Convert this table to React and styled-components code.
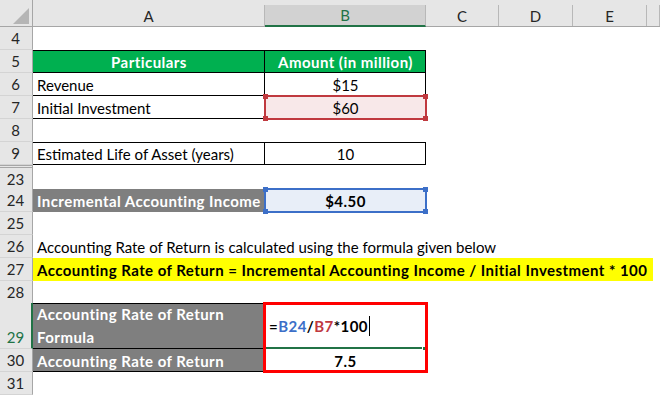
import React from "react";
import styled, { createGlobalStyle, css } from "styled-components";

const Global = createGlobalStyle`
  html, body { margin: 0; padding: 0; background: #fff; }
  body { font-family: "Lato", "Liberation Sans", sans-serif; }
`;

const COLS = "33px 232px 161px 73px 74px 74px 13px";

const Sheet = styled.div`
  width: 660px;
  height: 395px;
  overflow: hidden;
  display: flex;
  flex-direction: column;
  background: #fff;
  font-family: "Lato", "Liberation Sans", sans-serif;
  font-size: 15px;
  color: #000;
`;

const HeaderRow = styled.div`
  display: grid;
  grid-template-columns: ${COLS};
  height: 27px;
  flex: none;
  background: #e6e6e6;
  border-bottom: 1px solid #a6a6a6;
  box-sizing: border-box;
`;

const Corner = styled.div`
  position: relative;
  border-right: 1px solid #a6a6a6;
  display: flex;
  align-items: flex-end;
  justify-content: flex-end;
  padding: 0 3px 2px 0;
`;

const ColHead = styled.div`
  display: flex;
  align-items: center;
  justify-content: center;
  margin-top: 5px;
  border-right: 1px solid #b8b8b8;
  color: #262626;
  font-size: 15px;
  box-sizing: border-box;
  ${(p) =>
    p.$active &&
    css`
      background: #d2d2d2;
      color: #217346;
      border-bottom: 2px solid #217346;
      margin-bottom: -1px;
    `}
`;

const Row = styled.div`
  display: grid;
  grid-template-columns: ${COLS};
  height: ${(p) => p.$h || 23}px;
  flex: none;
`;

const RowHead = styled.div`
  background: #e6e6e6;
  border-right: ${(p) => (p.$active ? "2px solid #217346" : "1px solid #a6a6a6")};
  border-bottom: 1px solid #d4d4d4;
  ${(p) => p.$hidden && css`border-top: 3px double #a6a6a6;`}
  box-sizing: border-box;
  display: flex;
  align-items: ${(p) => (p.$bottom ? "flex-end" : "center")};
  justify-content: center;
  color: ${(p) => (p.$active ? "#217346" : "#262626")};
  font-size: 15px;
  padding-right: ${(p) => (p.$active ? "0" : "1px")};
  line-height: 22px;
`;

const line = "#000";

const Cell = styled.div`
  position: relative;
  display: flex;
  align-items: center;
  justify-content: ${(p) =>
    p.$align === "center" ? "center" : p.$align === "right" ? "flex-end" : "flex-start"};
  padding: 0 4px;
  box-sizing: border-box;
  white-space: nowrap;
  background: ${(p) => p.$bg || "transparent"};
  color: ${(p) => p.$color || "#000"};
  font-weight: ${(p) => (p.$bold ? 700 : 400)};
  letter-spacing: ${(p) => (p.$bold ? "0.45px" : "0")};
  ${(p) => p.$span && css`grid-column: ${p.$span};`}
  box-shadow: ${(p) =>
    [
      p.$top && `inset 0 1px 0 ${line}`,
      p.$right && `inset -1px 0 0 ${line}`,
      p.$bottom && `inset 0 -1px 0 ${line}`,
    ]
      .filter(Boolean)
      .join(", ") || "none"};
`;

const WrapText = styled.div`
  white-space: normal;
  line-height: 23px;
  align-self: stretch;
  display: flex;
  flex-direction: column;
  justify-content: center;
`;

const Highlight = styled(Cell)`
  background: #ffff00;
  margin-right: 7px;
  padding-left: 4px;
`;

const Selection = styled.div`
  position: absolute;
  left: -1px;
  top: -1px;
  right: -1px;
  bottom: -1px;
  border: 2px solid ${(p) => p.$color};
  pointer-events: none;
`;

const Handle = styled.span`
  position: absolute;
  width: 5px;
  height: 5px;
  background: ${(p) => p.$color};
  ${(p) => (p.$v === "top" ? "top: -3px;" : "bottom: -3px;")}
  ${(p) => (p.$h === "left" ? "left: -3px;" : "right: -3px;")}
`;

const RedBox = styled.div`
  position: absolute;
  left: -2px;
  top: -1px;
  width: 165px;
  height: 71px;
  border: 3px solid #ff0000;
  box-sizing: border-box;
  pointer-events: none;
  z-index: 2;
`;

const ActiveLine = styled.div`
  position: absolute;
  left: 1px;
  right: 4px;
  bottom: 0;
  height: 2px;
  background: #217346;
`;

const FillHandle = styled.span`
  position: absolute;
  right: 0px;
  bottom: -1px;
  width: 3px;
  height: 3px;
  background: #217346;
`;

const Formula = styled.span`
  font-weight: 700;
  letter-spacing: 0.45px;
  display: inline-flex;
  align-items: center;
`;

const Ref = styled.span`
  color: ${(p) => p.$color};
`;

const Caret = styled.span`
  display: inline-block;
  width: 1px;
  height: 20px;
  background: #000;
  margin-left: 1px;
`;

function SelectionFrame({ color }) {
  return (
    <Selection $color={color}>
      <Handle $color={color} $v="top" $h="left" />
      <Handle $color={color} $v="bottom" $h="left" />
      <Handle $color={color} $v="top" $h="right" />
      <Handle $color={color} $v="bottom" $h="right" />
    </Selection>
  );
}

function Empty({ n, h, hidden }) {
  return (
    <Row $h={h}>
      <RowHead $hidden={hidden}>{n}</RowHead>
    </Row>
  );
}

export default function App() {
  const gray = "#7f7f7f";
  return (
    <>
      <Global />
      <Sheet>
        <HeaderRow>
          <Corner>
            <svg width="16" height="16" viewBox="0 0 16 16">
              <polygon points="16,0 16,16 0,16" fill="#b5b5b5" />
            </svg>
          </Corner>
          <ColHead>A</ColHead>
          <ColHead $active>B</ColHead>
          <ColHead>C</ColHead>
          <ColHead>D</ColHead>
          <ColHead>E</ColHead>
          <ColHead />
        </HeaderRow>

        <Empty n={4} />
        <Row>
          <RowHead>5</RowHead>
          <Cell $bg="#00b050" $color="#fff" $bold $align="center" $top $right $bottom>
            Particulars
          </Cell>
          <Cell $bg="#00b050" $color="#fff" $bold $align="center" $top $right $bottom>
            Amount (in million)
          </Cell>
        </Row>
        <Row>
          <RowHead>6</RowHead>
          <Cell $right $bottom>Revenue</Cell>
          <Cell $align="center" $right $bottom>$15</Cell>
        </Row>
        <Row>
          <RowHead>7</RowHead>
          <Cell $bottom>Initial Investment</Cell>
          <Cell $align="center" $bg="#f8e8e9">
            $60
            <SelectionFrame color="#c0393f" />
          </Cell>
        </Row>
        <Empty n={8} />
        <Row>
          <RowHead>9</RowHead>
          <Cell $top $right $bottom>Estimated Life of Asset (years)</Cell>
          <Cell $align="center" $top $right $bottom>10</Cell>
        </Row>
        <Empty n={23} h={24} hidden />
        <Row $h={23}>
          <RowHead>24</RowHead>
          <Cell $bg={gray} $color="#fff" $bold>Incremental Accounting Income</Cell>
          <Cell $align="center" $bold $bg="#e8eef8">
            $4.50
            <SelectionFrame color="#3c6fc8" />
          </Cell>
        </Row>
        <Empty n={25} />
        <Row>
          <RowHead>26</RowHead>
          <Cell $span="2 / -1">
            Accounting Rate of Return is calculated using the formula given below
          </Cell>
        </Row>
        <Row>
          <RowHead>27</RowHead>
          <Highlight $span="2 / -1" $bold>
            Accounting Rate of Return = Incremental Accounting Income / Initial Investment * 100
          </Highlight>
        </Row>
        <Empty n={28} h={22} />
        <Row $h={46}>
          <RowHead $active $bottom>29</RowHead>
          <Cell $bg={gray} $color="#fff" $bold $top $bottom>
            <WrapText>
              <span>Accounting Rate of Return</span>
              <span>Formula</span>
            </WrapText>
          </Cell>
          <Cell $align="left">
            <Formula>
              =<Ref $color="#3c6fc8">B24</Ref>/<Ref $color="#c0393f">B7</Ref>*100
              <Caret />
            </Formula>
            <ActiveLine />
            <FillHandle />
            <RedBox />
          </Cell>
        </Row>
        <Row>
          <RowHead>30</RowHead>
          <Cell $bg={gray} $color="#fff" $bold $bottom>Accounting Rate of Return</Cell>
          <Cell $align="center" $bold>7.5</Cell>
        </Row>
        <Empty n={31} />
      </Sheet>
    </>
  );
}
